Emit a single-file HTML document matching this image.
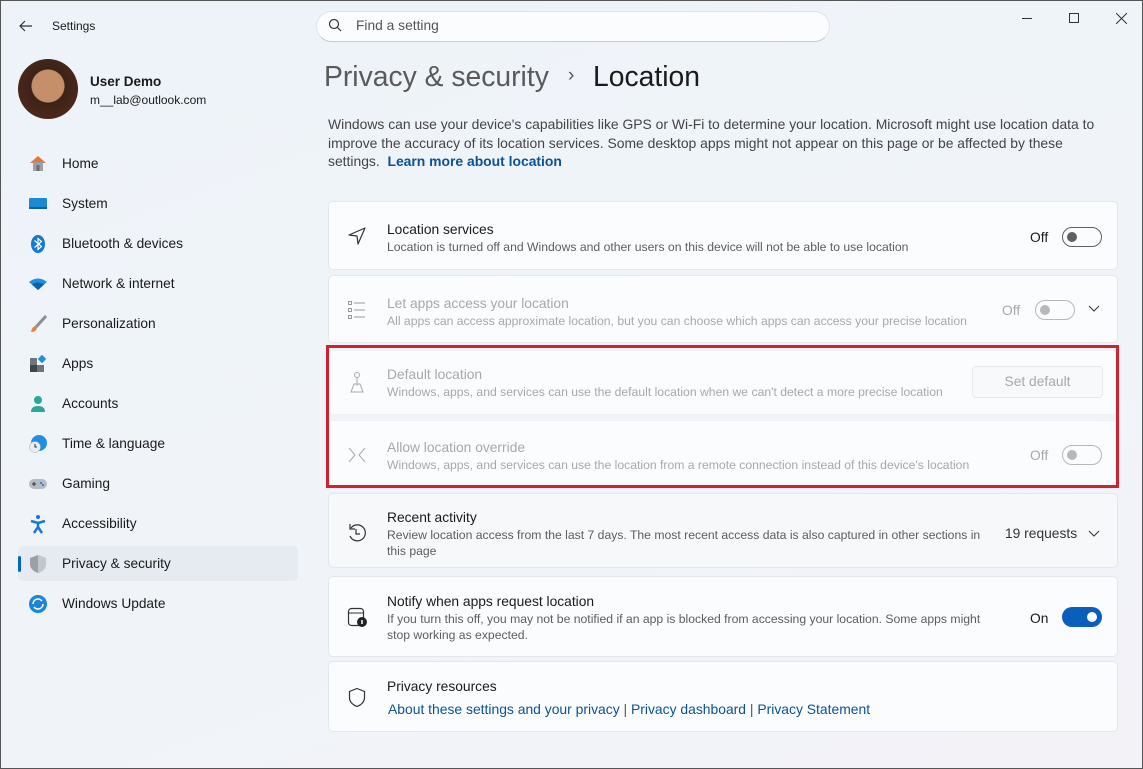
<!DOCTYPE html>
<html><head><meta charset="utf-8"><style>
*{box-sizing:border-box;margin:0;padding:0}
body{width:1143px;height:769px;overflow:hidden;font-family:"Liberation Sans",sans-serif;background:linear-gradient(160deg,#eef3f9 0%,#f0f4f9 60%,#f3f2f7 100%);position:relative;color:#1a1a1a;border:1px solid #555;}
.a{position:absolute;white-space:nowrap}
.nav{position:absolute;left:61px;font-size:13.7px;color:#1a1a1a}
.ic{position:absolute;left:27px;width:20px;height:20px}
.card{position:absolute;left:327px;width:790px;background:#fbfcfd;border:1px solid #e3e6ea;border-radius:5px}
.t{position:absolute;left:58px;font-size:13.8px;color:#1a1a1a;white-space:nowrap}
.s{position:absolute;left:58px;font-size:12.2px;color:#5d5d5d;white-space:nowrap;line-height:16px}
.dis .t,.dis .s{color:#a8a8a8}
.tog{position:absolute;width:40px;height:20px;border-radius:10px;border:1px solid #5f5f5f}
.tog::after{content:"";position:absolute;left:4px;top:4px;width:10px;height:10px;border-radius:50%;background:#5f5f5f}
.tog.d{border-color:#b8b8b8}.tog.d::after{background:#b8b8b8}
.lbl{position:absolute;font-size:13.8px;color:#1a1a1a}
.link{color:#0a5294}
</style></head><body>
<svg class="a" style="left:17px;top:18px" width="16" height="14"><path d="M14 7H2M7 2L2 7l5 5" stroke="#333" fill="none" stroke-width="1.2"/></svg>
<div class="a" style="left:51px;top:18px;font-size:12px;color:#1a1a1a">Settings</div>
<div class="a" style="left:17px;top:58px;width:60px;height:60px;border-radius:50%;background:radial-gradient(circle at 50% 45%,#c58f6a 0 16px,#3b2218 17px,#5a2d1c 100%)"></div>
<div class="a" style="left:89px;top:73px;font-size:13.5px;font-weight:bold">User Demo</div>
<div class="a" style="left:89px;top:92px;font-size:12px">m__lab@outlook.com</div>

<div class="a" style="left:17px;top:545px;width:280px;height:35px;background:#e6ebf1;border-radius:5px"></div>
<div class="a" style="left:17px;top:555px;width:3px;height:16px;background:#0067c0;border-radius:2px"></div>

<svg class="ic" style="top:152px" viewBox="0 0 20 20"><path d="M2 10L10 3l8 7" fill="#e8743b"/><rect x="5" y="9" width="10" height="9" fill="#9aa0a6"/><rect x="8.5" y="12" width="3" height="6" fill="#6b6f75"/></svg>
<div class="nav" style="top:155px">Home</div>
<svg class="ic" style="top:193px" viewBox="0 0 20 20"><rect x="1" y="4" width="18" height="11" rx="1" fill="#1a8ad4"/><rect x="1" y="13" width="18" height="2" fill="#0f5f99"/></svg>
<div class="nav" style="top:195px">System</div>
<svg class="ic" style="top:233px" viewBox="0 0 20 20"><ellipse cx="10" cy="10" rx="7" ry="9" fill="#1677d8"/><path d="M6.5 6.5l7 6-3.5 3V4.5l3.5 3-7 6" stroke="#fff" fill="none" stroke-width="1.2"/></svg>
<div class="nav" style="top:235px">Bluetooth &amp; devices</div>
<svg class="ic" style="top:273px" viewBox="0 0 20 20"><path d="M1 8q9-7 18 0l-9 8z" fill="#1f8fe0"/><path d="M4 10.5q6-4 12 0l-6 5.5z" fill="#0c5fad"/></svg>
<div class="nav" style="top:275px">Network &amp; internet</div>
<svg class="ic" style="top:313px" viewBox="0 0 20 20"><path d="M18 2L8 13" stroke="#8a8f96" stroke-width="3"/><path d="M8 12q-4 0-5 6 5 0 6-4z" fill="#e8833a"/></svg>
<div class="nav" style="top:315px">Personalization</div>
<svg class="ic" style="top:353px" viewBox="0 0 20 20"><rect x="2" y="4" width="7" height="7" fill="#6f757c"/><rect x="2" y="11" width="7" height="7" fill="#40454b"/><rect x="9" y="11" width="7" height="7" fill="#6f757c"/><rect x="11" y="2" width="6" height="6" fill="#1f8fe0" transform="rotate(45 14 5)"/></svg>
<div class="nav" style="top:355px">Apps</div>
<svg class="ic" style="top:393px" viewBox="0 0 20 20"><circle cx="10" cy="6" r="4" fill="#2aa79b"/><path d="M3 18q0-6 7-6t7 6z" fill="#2aa79b"/></svg>
<div class="nav" style="top:395px">Accounts</div>
<svg class="ic" style="top:433px" viewBox="0 0 20 20"><circle cx="11" cy="9" r="8" fill="#1f8fe0"/><circle cx="7" cy="13" r="5.5" fill="#e9edf1" stroke="#aaa" stroke-width=".5"/><path d="M7 10v3h2" stroke="#333" fill="none"/></svg>
<div class="nav" style="top:435px">Time &amp; language</div>
<svg class="ic" style="top:473px" viewBox="0 0 20 20"><rect x="1" y="5" width="18" height="10" rx="5" fill="#b6bcc3"/><path d="M4 10h4M6 8v4" stroke="#333"/><circle cx="13" cy="9" r="1" fill="#1f6fd0"/><circle cx="15" cy="11" r="1" fill="#1f6fd0"/></svg>
<div class="nav" style="top:475px">Gaming</div>
<svg class="ic" style="top:513px" viewBox="0 0 20 20"><circle cx="10" cy="3" r="2" fill="#1677d8"/><path d="M3 7l7 2 7-2M10 9v4l-4 6M10 13l4 6" stroke="#1677d8" stroke-width="2.5" fill="none"/></svg>
<div class="nav" style="top:515px">Accessibility</div>
<svg class="ic" style="top:553px" viewBox="0 0 20 20"><path d="M10 1l8 3v6q0 6-8 9-8-3-8-9V4z" fill="#9aa0a7"/><path d="M10 1l8 3v6q0 6-8 9z" fill="#c3c7cc"/></svg>
<div class="nav" style="top:555px">Privacy &amp; security</div>
<svg class="ic" style="top:593px" viewBox="0 0 20 20"><circle cx="10" cy="10" r="9" fill="#1a86d9"/><path d="M5 10a5 5 0 0 1 9-3M15 10a5 5 0 0 1-9 3" stroke="#fff" fill="none" stroke-width="1.5"/></svg>
<div class="nav" style="top:595px">Windows Update</div>

<div class="a" style="left:315px;top:10px;width:514px;height:31px;background:#fbfcfd;border:1px solid #e0e3e7;border-radius:16px;border-bottom-color:#c8ccd1"></div>
<svg class="a" style="left:327px;top:17px" width="14" height="14"><circle cx="6" cy="6" r="4.5" stroke="#333" fill="none" stroke-width="1.2"/><path d="M9.5 9.5L13 13" stroke="#333" stroke-width="1.2"/></svg>
<div class="a" style="left:355px;top:17px;font-size:13.8px;color:#555">Find a setting</div>
<div class="a" style="left:1021px;top:17px;width:10px;height:1px;background:#333"></div>
<div class="a" style="left:1068px;top:12px;width:10px;height:10px;border:1px solid #333"></div>
<svg class="a" style="left:1115px;top:12px" width="11" height="11"><path d="M0 0L11 11M11 0L0 11" stroke="#333"/></svg>

<div class="a" style="left:323px;top:59px;font-size:28.3px;color:#5a5a5a">Privacy &amp; security</div>
<div class="a" style="left:567px;top:64px;font-size:19px;color:#555">›</div>
<div class="a" style="left:592px;top:59px;font-size:28.3px;color:#1a1a1a">Location</div>
<div class="a" style="left:327px;top:114px;font-size:13.9px;color:#444;line-height:18.5px">Windows can use your device's capabilities like GPS or Wi-Fi to determine your location. Microsoft might use location data to<br>improve the accuracy of its location services. Some desktop apps might not appear on this page or be affected by these<br>settings.&nbsp; <b class="link" style="font-weight:bold">Learn more about location</b></div>

<div class="card" style="top:200px;height:69px">
<svg class="a" style="left:18px;top:24px" width="20" height="20"><path d="M18 2L2 9l8 1 1 8z" stroke="#333" fill="none" stroke-width="1.2" stroke-linejoin="round"/></svg>
<div class="t" style="top:20px">Location services</div>
<div class="s" style="top:37px">Location is turned off and Windows and other users on this device will not be able to use location</div>
<div class="lbl" style="left:701px;top:28px">Off</div>
<div class="tog" style="left:733px;top:25px"></div>
</div>

<div class="card dis" style="top:274px;height:68px">
<svg class="a" style="left:18px;top:24px" width="20" height="20"><g stroke="#999" fill="none"><rect x="1.5" y="1.5" width="3" height="3"/><rect x="1.5" y="8.5" width="3" height="3"/><rect x="1.5" y="15.5" width="3" height="3"/><path d="M7 3h11M7 10h11M7 17h11"/></g></svg>
<div class="t" style="top:20px">Let apps access your location</div>
<div class="s" style="top:37px">All apps can access approximate location, but you can choose which apps can access your precise location</div>
<div class="lbl" style="left:673px;top:27px;color:#a8a8a8">Off</div>
<div class="tog d" style="left:706px;top:24px"></div>
<svg class="a" style="left:759px;top:29px" width="12" height="8"><path d="M1 1l5 5 5-5" stroke="#333" fill="none"/></svg>
</div>

<div class="card dis" style="top:349px;height:65px;border-color:#eef0f2">
<svg class="a" style="left:18px;top:20px" width="20" height="24"><g stroke="#aaa" fill="none"><circle cx="10" cy="4" r="2.5"/><path d="M10 7v8M4 21l3-8h6l3 8z"/></g></svg>
<div class="t" style="top:16px">Default location</div>
<div class="s" style="top:33px">Windows, apps, and services can use the default location when we can't detect a more precise location</div>
<div class="a" style="left:643px;top:15px;width:131px;height:32px;border:1px solid #e6e8eb;border-radius:4px;background:#f8f9fa;color:#a8a8a8;font-size:13.8px;text-align:center;line-height:30px">Set default</div>
</div>
<div class="card dis" style="top:419px;height:66px;border-color:#eef0f2">
<svg class="a" style="left:18px;top:24px" width="20" height="20"><path d="M2 3l6 7-6 7M18 3l-6 7 6 7" stroke="#aaa" fill="none"/></svg>
<div class="t" style="top:19px">Allow location override</div>
<div class="s" style="top:36px">Windows, apps, and services can use the location from a remote connection instead of this device's location</div>
<div class="lbl" style="left:701px;top:27px;color:#a8a8a8">Off</div>
<div class="tog d" style="left:733px;top:24px"></div>
</div>
<div class="a" style="left:325px;top:344px;width:793px;height:143px;border:3px solid #d2202f"></div>

<div class="card" style="top:492px;height:75px;background:#f6f8fa">
<svg class="a" style="left:18px;top:29px" width="20" height="20"><path d="M4 5a8 8 0 1 1-1 8" stroke="#333" fill="none" stroke-width="1.2"/><path d="M3 1v5h5" stroke="#333" fill="none" stroke-width="1.2"/><path d="M9 6v5h4" stroke="#333" fill="none" stroke-width="1.2"/></svg>
<div class="t" style="top:16px">Recent activity</div>
<div class="s" style="top:33px">Review location access from the last 7 days. The most recent access data is also captured in other sections in<br>this page</div>
<div class="lbl" style="left:676px;top:32px;color:#333">19 requests</div>
<svg class="a" style="left:759px;top:36px" width="12" height="8"><path d="M1 1l5 5 5-5" stroke="#333" fill="none"/></svg>
</div>

<div class="card" style="top:575px;height:81px">
<svg class="a" style="left:18px;top:30px" width="22" height="22"><rect x="1.5" y="1.5" width="15" height="17" rx="3" stroke="#333" fill="none" stroke-width="1.2"/><path d="M1.5 6h15" stroke="#333"/><circle cx="15" cy="15" r="5" fill="#222"/><path d="M15 13v4" stroke="#fff" stroke-width="1.5"/></svg>
<div class="t" style="top:17px">Notify when apps request location</div>
<div class="s" style="top:34px">If you turn this off, you may not be notified if an app is blocked from accessing your location. Some apps might<br>stop working as expected.</div>
<div class="lbl" style="left:701px;top:34px">On</div>
<div class="a" style="left:733px;top:30px;width:40px;height:20px;border-radius:10px;background:#0a5fbd"><div style="position:absolute;right:5px;top:5px;width:10px;height:10px;border-radius:50%;background:#fff"></div></div>
</div>

<div class="card" style="top:660px;height:71px">
<svg class="a" style="left:18px;top:25px" width="20" height="22"><path d="M10 1.5l7.5 3v6q0 6-7.5 9-7.5-3-7.5-9v-6z" stroke="#333" fill="none" stroke-width="1.2"/></svg>
<div class="t" style="top:17px">Privacy resources</div>
<div class="a" style="left:59px;top:39px;font-size:13.9px;color:#555"><span class="link">About these settings and your privacy</span> | <span class="link">Privacy dashboard</span> | <span class="link">Privacy Statement</span></div>
</div>
</body></html>
